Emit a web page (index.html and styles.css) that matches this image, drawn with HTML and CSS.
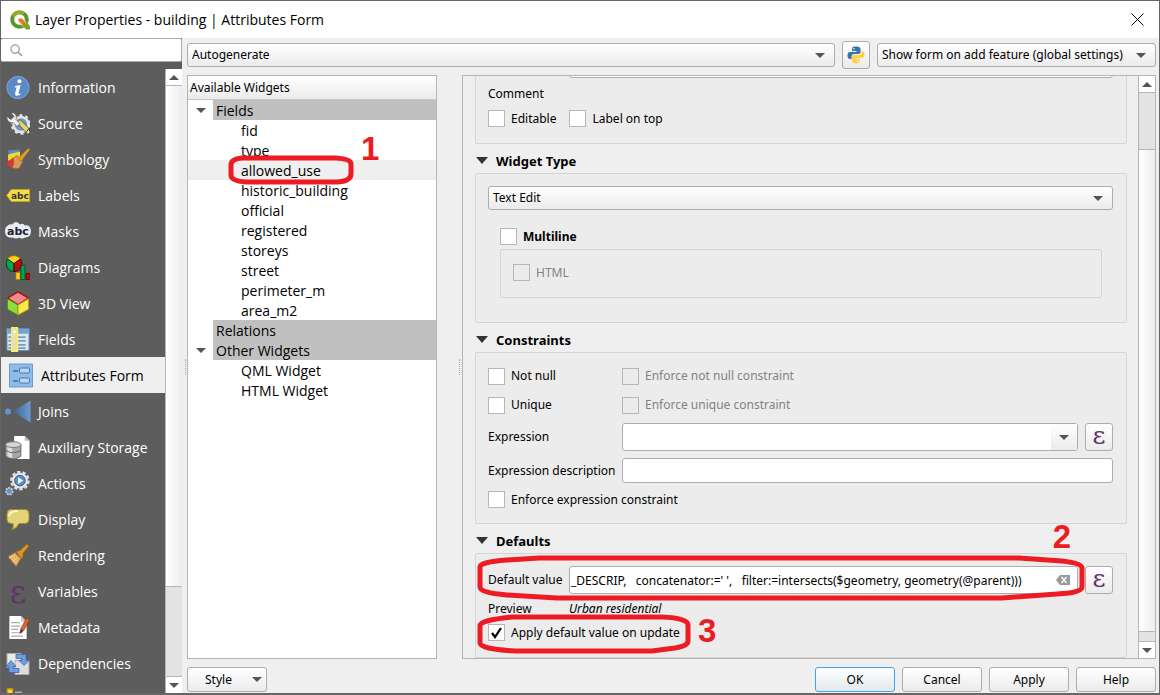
FILE: index.html
```html
<!DOCTYPE html>
<html lang="en">
<head>
  <meta charset="UTF-8">
  <title>Layer Properties - building | Attributes Form</title>
  <link rel="stylesheet" href="styles.css">
</head>
<body>
  <div class="window">
    <header class="titlebar">
      <svg class="logo" viewBox="0 0 20 20">
        <circle cx="9.500" cy="9.500" r="7.300" fill="none" stroke="#589632" stroke-width="4"/>
        <path d="M3 6.500A7.300 7.300 0 0 1 14 3.800" fill="none" stroke="#93b023" stroke-width="3"/>
        <path d="M9 9h4l7 7v3.500h-4L9 12.500z" fill="#fff"/>
        <path d="M13.500 12.500h3.500l3 3.500v3.500h-4l-4-4.500z" fill="#77a52f"/>
        <path d="M8.500 8.500h3.500l3 3v3.500h-2.500l-4-4z" fill="#ee7913"/>
      </svg>
      <h1>Layer Properties - building | Attributes Form</h1>
      <button class="close" aria-label="Close"><svg viewBox="0 0 13 13"><path d="M.5.5l12 12M12.500.5l-12 12" stroke="#000" fill="none"/></svg></button>
    </header>

    <div class="content">
      <aside class="sidebar">
        <label class="search">
          <svg viewBox="0 0 14 14"><circle cx="5.500" cy="5.500" r="4.500" fill="none" stroke="#999" stroke-width="1.300"/><path d="M9 9l4 4" stroke="#999" stroke-width="1.600"/></svg>
          <input type="text" aria-label="Search">
        </label>
        <div class="nav-wrap">
          <nav>
            <a href="#"><svg viewBox="0 0 24 24"><circle cx="12" cy="12" r="11.500" fill="#5b8ac4"/><circle cx="12" cy="12" r="11" fill="none" stroke="#7ba4d8"/><circle cx="13.500" cy="5.800" r="2" fill="#fff"/><path d="M9 10.500l5.500-1-2 8.500q0 1 2-.2l-.4 1.400q-5.600 2.600-5-1.200l1.500-6.300-2 .2z" fill="#fff"/></svg>Information</a>
            <a href="#"><svg viewBox="0 0 24 24"><circle cx="15" cy="13" r="7.500" fill="#6d97ca" stroke="#e6e6e6" stroke-width="2.500"/><circle cx="15" cy="13" r="9.300" fill="none" stroke="#e6e6e6" stroke-width="2" stroke-dasharray="3 3"/><path d="M11 11l3-3 9 9-3 4z" fill="#e8d46c" stroke="#544a1a" stroke-width=".8"/><path d="M20 21l3-4 1 4-2 2z" fill="#ddd" stroke="#222" stroke-width=".7"/><path d="M5 1a5 5 0 0 1 5 7l4 4-3 3-4-4a5 5 0 0 1-6-6l4 3 3-3z" fill="#eee" stroke="#555" stroke-width=".7"/></svg>Source</a>
            <a href="#"><svg viewBox="0 0 24 24"><path d="M2 3l11-1 1 5H3z" fill="#5c8bc8"/><path d="M2 7l12-3v9H2z" fill="#f3d52c"/><path d="M0 16l7-6 5 8-5 3z" fill="#e5352e"/><path d="M7 11l4-3 6 6-4 7q-4 1-7-1 3-4 1-9z" fill="#d79a5c" stroke="#8a5a28" stroke-width=".7"/><path d="M12 11l3 3 9-12-2-1z" fill="#e5a02e" stroke="#a46c18" stroke-width=".7"/></svg>Symbology</a>
            <a href="#"><svg viewBox="0 0 24 24"><path d="M.7 12l4.500-6H23.500v12H5.200z" fill="#f2dc4a" stroke="#c5a516"/><text class="abc-small" x="5" y="15">abc</text></svg>Labels</a>
            <a href="#"><svg class="wide" viewBox="0 0 28 24"><path d="M4 6q2-2 4-1 4-5 8 0 3-2 5 1 5-1 6 5 0 7-6 7-3 2-6 0-3 2-6 0-8 1-8-6 0-5 3-6z" fill="#e7ecf8"/><text class="abc-large" x="3" y="15">abc</text></svg>Masks</a>
            <a href="#"><svg viewBox="0 0 24 24"><path d="M8 8L1.500 3.500A8 8 0 0 1 14.500 3.500z" fill="#ffcf1f" stroke="#a56c00" stroke-width=".8"/><path d="M8 8v8A8 8 0 0 1 1.500 3.500z" fill="#00a94f" stroke="#04401f"/><path d="M8 8v8a8 8 0 0 0 6.500-12.500z" fill="#b80d0d" stroke="#500"/><path d="M10 17h4v7h-4z" fill="#ffcf1f" stroke="#b17b00" stroke-width=".7"/><path d="M15 10h4v14h-4z" fill="#00a94f" stroke="#04401f" stroke-width=".7"/><path d="M20 18h4v6h-4z" fill="#b80d0d" stroke="#500" stroke-width=".7"/></svg>Diagrams</a>
            <a href="#"><svg viewBox="0 0 24 26"><path d="M12 1l11 6.500-11 7L1 7.500z" fill="#f48989" stroke="#a60d17" stroke-width="1.500"/><path d="M1 8l11 6.500V25L1 19z" fill="#8ede3e" stroke="#4c8f12"/><path d="M23 8l-11 6.500V25l11-6z" fill="#fbe94e" stroke="#b09c12"/></svg>3D View</a>
            <a href="#"><svg viewBox="0 0 24 26"><path d="M.5 1.500h23v23H.5z" fill="#dfe5ec" stroke="#5789bd"/><path d="M1 2h22v5H1z" fill="#6fa4d6"/><path d="M2 10.500h20M2 14.500h20M2 18.500h20M2 22h20" stroke="#4d80bb" stroke-width="1.300" stroke-dasharray="8 2"/><path d="M5.500.700h6v24.600h-6z" fill="#e9dfb5" stroke="#fff04f" stroke-width="1.400"/><circle cx="8.500" cy="5" r="1.300" fill="#fff"/></svg>Fields</a>
            <a href="#" class="selected"><svg viewBox="0 0 24 24"><path d="M.5.5h23v23H.5z" fill="#8fbbe6" stroke="#659dd2"/><rect x="10.500" y="4.500" width="10" height="5" rx="1" fill="#b9d7f3" stroke="#3c7cb8"/><rect x="10.500" y="14.500" width="10" height="5" rx="1" fill="#b9d7f3" stroke="#3c7cb8"/><path d="M4 7.500h5M4 17.500h5" stroke="#336da5" stroke-width="1.500"/></svg>Attributes Form</a>
            <a href="#"><svg class="wide" viewBox="0 0 28 24"><defs><linearGradient id="join"><stop offset="0" stop-color="#3a648f"/><stop offset="1" stop-color="#6c9cd3"/></linearGradient></defs><circle cx="4" cy="12" r="3" fill="#6395cc"/><path d="M9 12L26.500 1v22z" fill="url(#join)"/></svg>Joins</a>
            <a href="#"><svg class="wide" viewBox="0 0 28 26"><path d="M10 1h11l5 5v19H10z" fill="#fff"/><path d="M21 1v5h5z" fill="#bbb"/><path d="M1 10v12q8 6 16 0V10z" fill="#a7a7a7" stroke="#666"/><path d="M3 12v10q3 2 5 2V13z" fill="#ddd"/><ellipse cx="9" cy="10" rx="8" ry="3" fill="#d5d5d5" stroke="#777"/><path d="M1 16q8 5 16 0" fill="none" stroke="#666"/></svg>Auxiliary Storage</a>
            <a href="#"><svg class="wide" viewBox="0 0 28 26"><circle cx="16" cy="10" r="9" fill="none" stroke="#ddd" stroke-width="2.500" stroke-dasharray="3.500 2.100"/><circle cx="16" cy="10" r="7" fill="#5a8cc9" stroke="#e7e7e7" stroke-width="2.500"/><circle cx="16" cy="10" r="5.500" fill="none" stroke="#38689f"/><path d="M14 6.500l5.500 3.500-5.500 3.500z" fill="#fff"/><circle cx="5" cy="21" r="3.500" fill="#6596cc" stroke="#d4d4d4" stroke-width="1.600" stroke-dasharray="2 1"/></svg>Actions</a>
            <a href="#"><svg viewBox="0 0 24 24"><path d="M5 2h14q4 0 4 4v6q0 4-4 4h-6q-2 5-7 6 2-3 1-6H5q-4 0-4-4V6q0-4 4-4z" fill="#e3d479" stroke="#a28e25"/><path d="M3 9q0-5 9-5.500" fill="none" stroke="#fffce0" stroke-width="1.500"/></svg>Display</a>
            <a href="#"><svg viewBox="0 0 24 24"><path d="M2 13l7-4 6 6-5 8z" fill="#e1ad65" stroke="#a26b23"/><path d="M4 13l7 8M6 12l6 7M3 15l6-4M6 18l6-4" stroke="#f1cf96" stroke-width=".8"/><path d="M10 8l4-1 7-6.500 2 2L17 10v4l-2 1z" fill="#d99528" stroke="#99600e" stroke-width=".8"/></svg>Rendering</a>
            <a href="#"><span class="epsilon-big">ε</span>Variables</a>
            <a href="#"><svg viewBox="0 0 24 26"><path d="M3 1h12l6 6v18H3z" fill="#fff"/><path d="M15 1v6h6z" fill="#ccc"/><path d="M5 8h9M5 11.500h9M5 15h7M5 18.500h12M5 22h12" stroke="#aaa" stroke-width="1.200"/><path d="M15 14l6-11 3 2-6 11-4 3z" fill="#e3632d" stroke="#8e371b" stroke-width=".7"/><path d="M14 19l1-4 2.500 1.500z" fill="#333"/></svg>Metadata</a>
            <a href="#"><svg viewBox="0 0 24 24"><path d="M1 2h14v14H1z" fill="#eaeaea" stroke="#aaa"/><path d="M9 9h14v14H9z" fill="#ddd" stroke="#aaa"/><path d="M10 3h10v6h3l-5 5-5-5h3V7h-6z" fill="#6d9ee5" stroke="#3b68aa" stroke-width=".8"/><path d="M13 21H3v-6H0l5-6 5 6H7v2h6z" fill="#6d9ee5" stroke="#3b68aa" stroke-width=".8"/></svg>Dependencies</a>
            <a href="#" aria-label="Legend"><svg viewBox="0 0 24 24"><path d="M1.500 1.500h5v5h-5z" fill="#ffdc26" stroke="#d79c00" stroke-width="1.500"/><path d="M9 5h7" stroke="#aaa" stroke-width="2"/></svg></a>
          </nav>
          <div class="scrollbar">
            <span class="step up"></span>
            <span class="thumb nav-thumb"></span>
            <span class="trough nav-trough"></span>
            <span class="step down"></span>
          </div>
        </div>
      </aside>

      <main>
        <div class="toolbar">
          <div class="combo grow">
            <select aria-label="Form layout"><option>Autogenerate</option></select>
            <i class="arrow"></i>
          </div>
          <button class="tool" aria-label="Python init function">
            <svg viewBox="0 0 18 18">
              <path d="M9 .5c-4 0-4 1.500-4 3V5h4.500v1H3C1 6 .5 8 .5 9.500S1 13 3 13h1.500v-2c0-2 1-3 3-3h4C13 8 13.500 7 13.500 5.500v-2c0-2-1-3-4.500-3z" fill="#3774a8"/>
              <path d="M9 17.500c4 0 4-1.500 4-3V13H8.500v-1H15c2 0 2.500-2 2.500-3.500S17 5 15 5h-.5v1.500c0 2-1 2.500-3 2.500h-4C5.500 9 5 10 5 11.500v3c0 2 1 3 4 3z" fill="#ffd140"/>
              <circle cx="7" cy="2.700" r=".8" fill="#fff"/><circle cx="11" cy="15.300" r=".8" fill="#fff"/>
            </svg>
          </button>
          <div class="combo form-mode">
            <select aria-label="Show form mode"><option>Show form on add feature (global settings)</option></select>
            <i class="arrow"></i>
          </div>
        </div>

        <div class="panes">
          <span class="grip"></span>
          <section class="tree">
            <h2>Available Widgets</h2>
            <ul>
              <li class="group"><i class="arrow"></i><span>Fields</span></li>
              <li>fid</li>
              <li>type</li>
              <li class="current">allowed_use
                <svg class="callout callout-1" viewBox="0 0 126 30" preserveAspectRatio="none"><path d="M14 3H108Q123 4 123 9V19Q123 26 110 27H18Q3 26 3 20V10Q3 4 14 3z"/></svg>
                <b class="mark mark-1">1</b>
              </li>
              <li>historic_building</li>
              <li>official</li>
              <li>registered</li>
              <li>storeys</li>
              <li>street</li>
              <li>perimeter_m</li>
              <li>area_m2</li>
              <li class="group"><i></i><span>Relations</span></li>
              <li class="group"><i class="arrow"></i><span>Other Widgets</span></li>
              <li>QML Widget</li>
              <li>HTML Widget</li>
            </ul>
          </section>
          <span class="grip"></span>

          <section class="settings">
            <div class="scroll-area">
              <div class="box general">
                <input class="field alias" type="text" aria-label="Alias">
                <p>Comment</p>
                <div class="checks">
                  <label class="check"><input type="checkbox">Editable</label>
                  <label class="check"><input type="checkbox">Label on top</label>
                </div>
              </div>

              <h3><i class="arrow"></i>Widget Type</h3>
              <div class="box widget-type">
                <div class="combo">
                  <select aria-label="Widget type"><option>Text Edit</option></select>
                  <i class="arrow"></i>
                </div>
                <div class="multiline">
                  <label class="check strong"><input type="checkbox">Multiline</label>
                  <div class="box inner">
                    <label class="check off"><input type="checkbox" disabled>HTML</label>
                  </div>
                </div>
              </div>

              <h3><i class="arrow"></i>Constraints</h3>
              <div class="box constraints">
                <label class="check"><input type="checkbox">Not null</label>
                <label class="check off"><input type="checkbox" disabled>Enforce not null constraint</label>
                <label class="check"><input type="checkbox">Unique</label>
                <label class="check off"><input type="checkbox" disabled>Enforce unique constraint</label>
                <label for="expression">Expression</label>
                <div class="with-button">
                  <div class="combo editable">
                    <input class="field" id="expression" type="text">
                    <span class="drop"><i class="arrow"></i></span>
                  </div>
                  <button class="tool epsilon" aria-label="Expression builder">ε</button>
                </div>
                <label for="description">Expression description</label>
                <input class="field" id="description" type="text">
                <label class="check wide-row"><input type="checkbox">Enforce expression constraint</label>
              </div>

              <h3><i class="arrow"></i>Defaults</h3>
              <div class="box defaults">
                <label for="default">Default value</label>
                <div class="with-button">
                  <div class="combo">
                    <input class="field" id="default" type="text" value="_DESCRIP,   concatenator:=' ',   filter:=intersects($geometry, geometry(@parent)))">
                    <svg class="clear" viewBox="0 0 14 10"><path d="M0 5l4-5h10v10H4z" fill="#999"/><path d="M5.500 2l5 6M10.500 2l-5 6" stroke="#fff" stroke-width="1.300"/></svg>
                  </div>
                  <button class="tool epsilon" aria-label="Default value expression">ε</button>
                </div>
                <span>Preview</span>
                <em>Urban residential</em>
                <label class="check wide-row"><input type="checkbox" checked>Apply default value on update</label>
                <svg class="callout callout-2" viewBox="0 0 608 46" preserveAspectRatio="none"><path d="M62 3H542L585 6Q605 8 605 13V32Q605 38 580 39L525 43H80L30 40Q3 38 3 32V12Q3 7 30 5z"/></svg>
                <b class="mark mark-2">2</b>
                <svg class="callout callout-3" viewBox="0 0 214 40" preserveAspectRatio="none"><path d="M35 3H185Q211 4 211 11V27Q211 32 198 34L175 37H38Q3 35 3 29V12Q3 6 35 3z"/></svg>
                <b class="mark mark-3">3</b>
              </div>
            </div>
            <div class="scrollbar">
              <span class="step up"></span>
              <span class="trough top-trough"></span>
              <span class="thumb form-thumb"></span>
              <span class="trough bottom-trough"></span>
              <span class="step down"></span>
            </div>
          </section>
        </div>

        <footer>
          <button class="push style">Style<i class="arrow"></i></button>
          <button class="push primary">OK</button>
          <button class="push">Cancel</button>
          <button class="push">Apply</button>
          <button class="push">Help</button>
        </footer>
      </main>
    </div>
  </div>
</body>
</html>
```

FILE: styles.css
```css
* {
  box-sizing: border-box;
}
body {
  margin: 0;
  background: #efefef;
  color: #000;
  font: 12px/16px "Noto Sans", sans-serif;
}
h1, h2, h3, p, ul {
  margin: 0;
  padding: 0;
  font-weight: normal;
}
button, input, select {
  margin: 0;
  color: inherit;
  font: inherit;
}
label {
  white-space: nowrap;
}
svg {
  display: block;
}

.window {
  display: flex;
  flex-direction: column;
  height: 100vh;
  border: 1px solid #666;
  border-bottom-width: 2px;
}
.titlebar {
  display: flex;
  align-items: center;
  height: 37px;
  padding: 0 15px 0 9px;
  background: #fff;
}
.logo {
  width: 20px;
  height: 20px;
}
.titlebar h1 {
  flex: 1;
  margin-left: 5px;
  font: 14px/20px "Open Sans", sans-serif;
}
.close {
  padding: 0;
  border: 0;
  background: none;
}
.close svg {
  width: 13px;
  height: 13px;
}
.content {
  display: flex;
  flex: 1;
  min-height: 0;
}

/* sidebar */
.sidebar {
  display: flex;
  flex-direction: column;
  width: 181px;
  background: #5d5d5d;
}
.search {
  display: flex;
  align-items: center;
  height: 24px;
  padding-left: 9px;
  border: 1px solid #aaa;
  border-left: 0;
  border-radius: 2px;
  background: #fff;
}
.search svg {
  width: 13px;
  height: 13px;
}
.search input {
  width: 140px;
  border: 0;
  outline: 0;
}
.nav-wrap {
  display: flex;
  flex: 1;
  min-height: 0;
  margin-top: 7px;
}
nav {
  flex: 1;
  overflow: hidden;
}
nav a {
  display: flex;
  align-items: center;
  gap: 8px;
  height: 36px;
  padding: 1px 0 0 5px;
  color: #fff;
  font: 14px/20px "Open Sans", sans-serif;
  text-decoration: none;
  white-space: nowrap;
}
nav svg {
  width: 24px;
  height: 25px;
}
nav .wide {
  width: 28px;
  margin: 0 -2px;
}
nav .selected {
  padding-left: 8px;
  background: #efefef;
  color: #000;
}
.abc-small {
  font: bold 9px "DejaVu Sans", sans-serif;
  fill: #333;
}
.abc-large {
  font: bold 11px "DejaVu Sans", sans-serif;
  fill: #222;
}
.epsilon-big {
  width: 24px;
  color: #5d3568;
  font: 32px/32px "DejaVu Serif", serif;
  text-align: center;
}

/* scrollbars */
.scrollbar {
  display: flex;
  flex-direction: column;
  flex: none;
  width: 17px;
  border-left: 1px solid #b5b5b5;
}
.step {
  display: flex;
  align-items: center;
  justify-content: center;
  height: 17px;
  background: #fff;
}
.step.up {
  border-bottom: 1px solid #b5b5b5;
}
.step.down {
  border-top: 1px solid #b5b5b5;
}
.step::before {
  content: "";
  border: 5px solid transparent;
}
.step.up::before {
  border-top: 0;
  border-bottom-color: #555;
}
.step.down::before {
  border-bottom: 0;
  border-top-color: #555;
}
.thumb {
  background: linear-gradient(to right, #fff, #eee);
}
.trough {
  background: #e3e3e3;
}
.nav-thumb {
  flex: 503;
}
.nav-trough {
  flex: 89;
  border-top: 1px solid #b5b5b5;
}
.top-trough {
  flex: 56;
  border-bottom: 1px solid #b5b5b5;
}
.form-thumb {
  flex: 483;
}
.bottom-trough {
  flex: 9;
  border-top: 1px solid #b5b5b5;
}

/* controls */
.arrow {
  flex: none;
  width: 0;
  border: 5px solid transparent;
  border-top-color: #555;
  border-bottom: 0;
}
.combo {
  display: grid;
  align-items: center;
}
.combo > * {
  grid-area: 1 / 1;
}
.combo > .arrow {
  justify-self: end;
  margin-right: 10px;
  pointer-events: none;
}
select, .push, .tool {
  border: 1px solid #adadad;
  border-radius: 3px;
  background: linear-gradient(#fff, #ebebeb);
}
select {
  appearance: none;
  width: 100%;
  height: 24px;
  padding: 0 20px 0 4px;
}
.tool {
  display: flex;
  align-items: center;
  justify-content: center;
  width: 28px;
  height: 28px;
  padding: 0;
}
.tool svg {
  width: 18px;
  height: 18px;
}
.epsilon {
  padding-bottom: 2px;
  color: #5d3568;
  font: 25px/24px "DejaVu Serif", serif;
}
.field {
  width: 100%;
  height: 25px;
  padding: 0 1px;
  border: 1px solid #adadad;
  border-radius: 3px;
  background: #fff;
}
.check {
  display: flex;
  align-items: center;
  gap: 6px;
}
.check input {
  appearance: none;
  width: 17px;
  height: 17px;
  border: 1px solid #b7b7b7;
  background: #fff;
}
.check input:checked {
  background: #fff url("data:image/svg+xml,%3Csvg xmlns='http://www.w3.org/2000/svg' viewBox='0 0 15 15'%3E%3Cpath d='M3 8l3 4 6-9' fill='none' stroke='%23000' stroke-width='2.200'/%3E%3C/svg%3E");
}
.check.off {
  color: #838383;
}
.check.off input {
  background: #ececec;
}
.strong {
  font-weight: bold;
}

/* main area */
main {
  display: flex;
  flex-direction: column;
  flex: 1;
  min-width: 0;
  padding: 3px 3px 1px 0;
}
.toolbar {
  display: flex;
  align-items: center;
  gap: 7px;
  padding-left: 5px;
}
.grow {
  flex: 1;
}
.form-mode {
  width: 279px;
}
.panes {
  display: flex;
  flex: 1;
  min-height: 0;
  margin: 6px 0 8px;
}
.grip {
  align-self: center;
  width: 2px;
  height: 16px;
  margin: 0 0 0 3px;
  border-left: 1px dotted #aaa;
}
.tree {
  width: 250px;
  border: 1px solid #b5b5b5;
  background: #fff;
}
.tree h2 {
  height: 24px;
  padding: 0 2px;
  border-bottom: 1px solid #c5c5c5;
  background: linear-gradient(#fff, #ebebeb);
  font-size: 12px;
  line-height: 24px;
}
.tree ul {
  list-style: none;
}
.tree li {
  position: relative;
  height: 20px;
  padding-left: 53px;
  font: 14px/22px "Open Sans", sans-serif;
}
.tree .current {
  background: #efefef;
}
.tree .group {
  display: grid;
  grid-template-columns: 25px 1fr;
  align-items: center;
  padding: 0;
}
.group .arrow {
  justify-self: center;
}
.group span {
  height: 20px;
  padding-left: 3px;
  background: #c0c0c0;
}
.tree + .grip {
  margin: 0 1px 0 22px;
}
.settings {
  display: flex;
  flex: 1;
  min-width: 0;
  border: 1px solid #b5b5b5;
}
.scroll-area {
  display: flex;
  flex-direction: column;
  justify-content: flex-end;
  flex: 1;
  min-width: 0;
  overflow: hidden;
  padding: 0 11px 0 12px;
}
.box {
  flex: none;
  padding: 12px 13px 12px 12px;
  border: 1px solid #d5d5d5;
  border-radius: 2px;
  background: #ececec;
}
h3 {
  display: flex;
  flex: none;
  align-items: center;
  gap: 8px;
  height: 29px;
  padding: 4px 0 0 1px;
  font-size: 13px;
  font-weight: bold;
}
h3 .arrow {
  border-width: 7px 6px 0;
  border-top-color: #333;
}
.general {
  display: flex;
  flex-direction: column;
  gap: 8px;
  padding-bottom: 16px;
}
.alias {
  width: auto;
  margin-left: 81px;
}
.checks {
  display: flex;
  gap: 13px;
}
.widget-type {
  padding-bottom: 24px;
}
.multiline {
  padding: 18px 11px 0 12px;
}
.inner {
  margin-top: 4px;
  padding: 14px 12px 16px;
}
.constraints {
  display: grid;
  grid-template-columns: 127px 1fr;
  grid-template-rows: 22px 22px 28px 25px 19px;
  gap: 7px;
  align-items: center;
  padding-bottom: 14px;
}
.with-button {
  display: grid;
  grid-template-columns: 1fr 28px;
  gap: 7px;
}
.with-button .field {
  height: 28px;
}
.drop {
  display: flex;
  align-items: center;
  justify-content: center;
  justify-self: end;
  width: 26px;
  height: 26px;
  margin-right: 1px;
  background: linear-gradient(#fff, #ebebeb);
}
.wide-row {
  grid-column: 1 / -1;
}
.defaults {
  position: relative;
  display: grid;
  grid-template-columns: 74px 1fr;
  gap: 7px;
  align-items: center;
  padding-bottom: 16px;
}
.clear {
  justify-self: end;
  width: 14px;
  height: 10px;
  margin-right: 8px;
}
.defaults #default {
  padding-right: 26px;
}

/* red annotations on top of the dialog */
.callout {
  position: absolute;
  fill: none;
  stroke: #ed1c24;
  stroke-width: 5px;
  pointer-events: none;
}
.callout path {
  vector-effect: non-scaling-stroke;
}
.mark {
  position: absolute;
  color: #ed1c24;
  font: bold 33px/34px "Liberation Sans", sans-serif;
}
.callout-1 {
  top: -5px;
  left: 40px;
  width: 126px;
  height: 30px;
}
.mark-1 {
  top: -28px;
  left: 173px;
}
.callout-2 {
  top: 1px;
  left: 1px;
  width: calc(100% - 42px);
  height: 46px;
}
.mark-2 {
  top: -34px;
  right: 55px;
}
.callout-3 {
  top: 60px;
  left: 1px;
  width: 214px;
  height: 40px;
}
.mark-3 {
  top: 60px;
  left: 222px;
}

footer {
  display: flex;
  gap: 7px;
  padding-left: 5px;
}
.push {
  width: 80px;
  height: 25px;
  padding: 0;
}
.primary {
  border-color: #3da5f5;
  background: linear-gradient(#fff, #e1e8ed);
}
.style {
  display: flex;
  align-items: center;
  justify-content: space-between;
  margin-right: auto;
  padding: 0 4px 0 17px;
}
```
